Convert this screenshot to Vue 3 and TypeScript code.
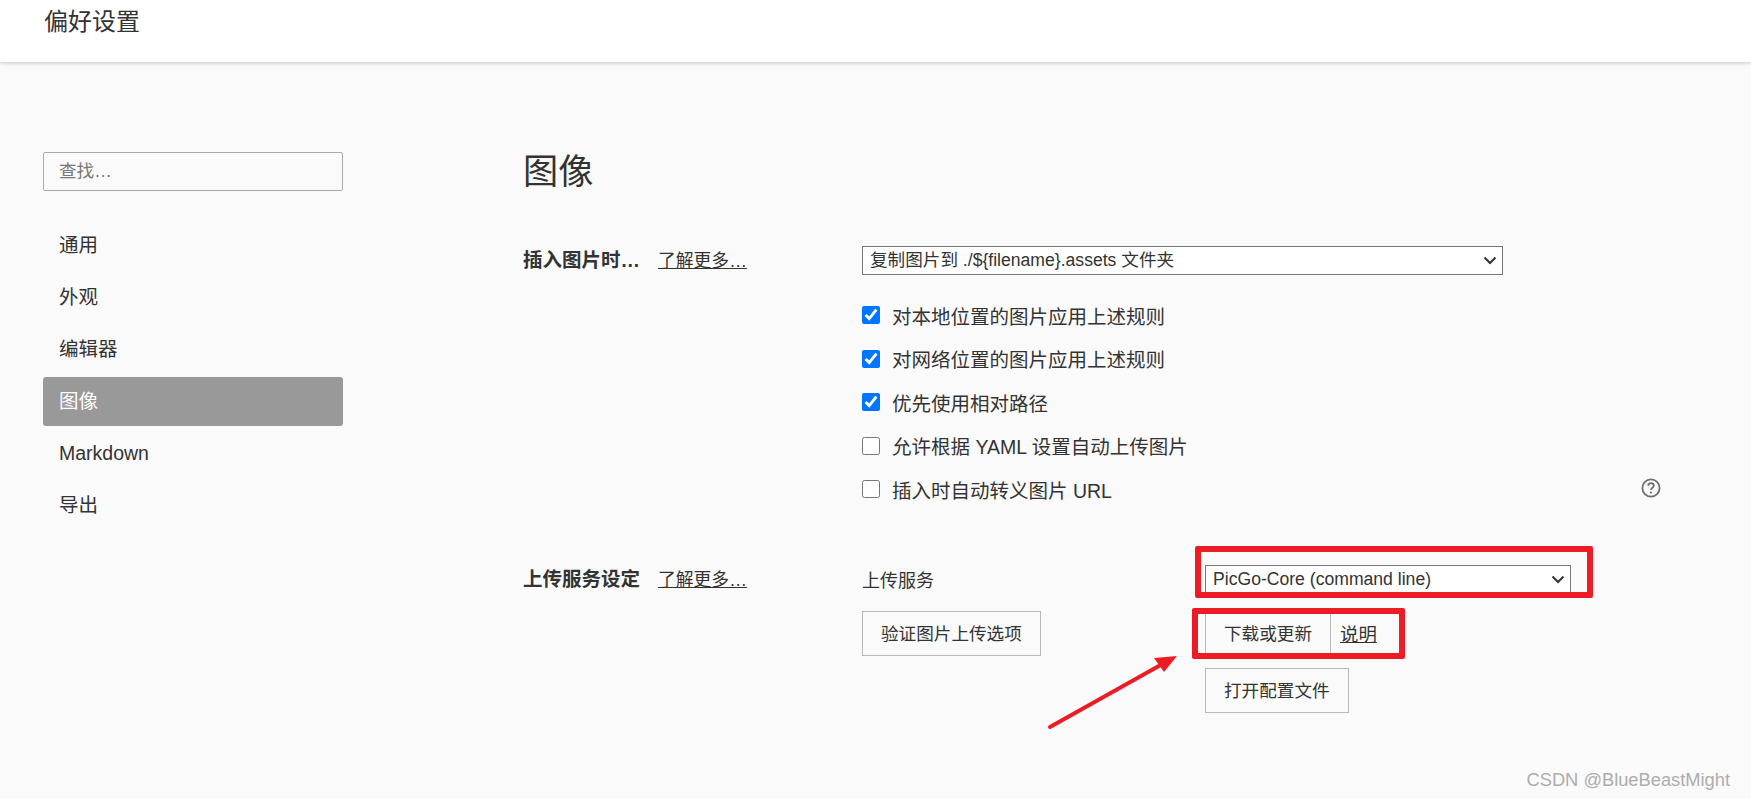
<script setup lang="ts">
const navItems = ['通用', '外观', '编辑器', '图像', 'Markdown', '导出']
const activeNav = '图像'

const imageRules = [
  { text: '对本地位置的图片应用上述规则', checked: true },
  { text: '对网络位置的图片应用上述规则', checked: true },
  { text: '优先使用相对路径', checked: true },
  { text: '允许根据 YAML 设置自动上传图片', checked: false },
  { text: '插入时自动转义图片 URL', checked: false },
]
</script>

<template>
  <div class="page">
    <header class="topbar">偏好设置</header>

    <div class="layout">
      <aside class="sidebar">
        <input class="search" type="text" placeholder="查找…" />
        <nav class="nav">
          <div
            v-for="item in navItems"
            :key="item"
            class="nav-item"
            :class="{ active: item === activeNav }"
          >
            {{ item }}
          </div>
        </nav>
      </aside>

      <main class="content">
        <h1 class="title">图像</h1>

        <section class="row insert-row">
          <div class="row-head">
            <span class="row-label">插入图片时…</span>
            <a class="more">了解更多…</a>
          </div>
          <div class="row-body">
            <div class="select-wrap wide">
              <select class="select">
                <option>复制图片到 ./${filename}.assets 文件夹</option>
              </select>
              <svg class="chevron" viewBox="0 0 14 9"><path d="M1.5 1.5 7 7l5.5-5.5" /></svg>
            </div>
            <div class="checks">
              <label v-for="rule in imageRules" :key="rule.text" class="check">
                <input type="checkbox" :checked="rule.checked" />
                <span>{{ rule.text }}</span>
              </label>
              <svg class="help" viewBox="0 0 20 20">
                <circle cx="10" cy="10" r="8.6" />
                <path d="M7.2 7.8c0-1.6 1.2-2.7 2.8-2.7s2.8 1 2.8 2.5c0 2.2-2.8 2.2-2.8 4.4" />
                <circle class="dot" cx="10" cy="14.6" r="1.1" />
              </svg>
            </div>
          </div>
        </section>

        <section class="row upload-row">
          <div class="row-head">
            <span class="row-label">上传服务设定</span>
            <a class="more">了解更多…</a>
          </div>
          <div class="upload-grid">
            <div class="upload-left">
              <div class="service-label">上传服务</div>
              <button class="btn">验证图片上传选项</button>
            </div>
            <div class="upload-right">
              <div class="select-wrap service marked">
                <select class="select">
                  <option>PicGo-Core (command line)</option>
                </select>
                <svg class="chevron" viewBox="0 0 14 9"><path d="M1.5 1.5 7 7l5.5-5.5" /></svg>
                <div class="mark mark-select"></div>
              </div>
              <div class="btn-line marked">
                <button class="btn">下载或更新</button>
                <a class="doc">说明</a>
                <div class="mark mark-buttons"></div>
                <svg class="arrow" viewBox="0 0 140 80">
                  <path class="arrow-line" d="M6 74 122 9" />
                  <path class="arrow-head" d="M133 3 110 5 120 19Z" />
                </svg>
              </div>
              <button class="btn">打开配置文件</button>
            </div>
          </div>
        </section>
      </main>
    </div>

    <div class="watermark">CSDN @BlueBeastMight</div>
  </div>
</template>

<style>
html,
body {
  margin: 0;
  background: #fafafa;
}
</style>

<style scoped>
.page {
  position: relative;
  height: 799px;
  overflow: hidden;
  background: #fafafa;
  color: #333;
  font-family: "Liberation Sans", "Noto Sans CJK SC", sans-serif;
  font-size: 17.6px;
}

.topbar {
  height: 62px;
  box-sizing: border-box;
  padding: 5px 0 0 44px;
  background: #fff;
  font-size: 24px;
  line-height: 34px;
  box-shadow: 0 1px 4px rgba(0, 0, 0, 0.22);
}

.layout {
  display: flex;
}

.sidebar {
  width: 300px;
  margin-left: 43px;
  padding-top: 90px;
}

.search {
  display: block;
  width: 100%;
  height: 39px;
  box-sizing: border-box;
  padding: 0 15px;
  border: 1px solid #aaa;
  border-radius: 2px;
  background: transparent;
  font: inherit;
  outline: none;
}

.search::placeholder {
  color: #777;
}

.nav {
  display: flex;
  flex-direction: column;
  gap: 3px;
  margin-top: 30px;
}

.nav-item {
  height: 49px;
  box-sizing: border-box;
  padding-left: 16px;
  border-radius: 3px;
  font-size: 19.5px;
  line-height: 48.5px;
}

.nav-item.active {
  background: #999;
  color: #fff;
}

.content {
  flex: 1;
  margin-left: 180px;
}

.title {
  margin: 85px 0 0;
  font-size: 35.2px;
  font-weight: 400;
  line-height: 50px;
}

.row {
  display: flex;
}

.insert-row {
  margin-top: 49px;
}

.upload-row {
  margin-top: 61px;
}

.row-head {
  display: flex;
  flex: none;
  width: 339px;
  align-items: baseline;
  line-height: 28px;
}

.row-label {
  width: 135px;
  font-size: 19.5px;
  font-weight: 700;
}

.more {
  font-size: 17.8px;
  text-decoration: underline;
  color: #333;
}

.row-body {
  flex: 1;
}

.select-wrap {
  position: relative;
  height: 29px;
}

.select-wrap.wide {
  width: 641px;
}

.select-wrap.service {
  width: 366px;
}

.select {
  display: block;
  width: 100%;
  height: 100%;
  box-sizing: border-box;
  padding: 0 30px 2px 7px;
  border: 1px solid #767676;
  border-radius: 0;
  background: #fff;
  color: #333;
  font: inherit;
  appearance: none;
}

.chevron {
  position: absolute;
  top: 10px;
  right: 6px;
  width: 14px;
  height: 9px;
  fill: none;
  stroke: #333;
  stroke-width: 2;
}

.checks {
  position: relative;
  display: flex;
  flex-direction: column;
  gap: 14px;
  margin-top: 25.5px;
}

.check {
  display: flex;
  align-items: center;
  gap: 12px;
  height: 29.5px;
  font-size: 19.5px;
}

.check input {
  width: 18px;
  height: 18px;
  margin: 0;
  accent-color: #0075ff;
}

.help {
  position: absolute;
  right: 90px;
  bottom: 6px;
  width: 20px;
  height: 20px;
  fill: none;
  stroke: #6e6e6e;
  stroke-width: 1.8;
}

.help .dot {
  fill: #6e6e6e;
  stroke: none;
}

.upload-grid {
  display: flex;
}

.upload-left {
  width: 343px;
}

.service-label {
  height: 46px;
  padding-top: 2px;
  box-sizing: border-box;
  line-height: 28px;
  font-size: 18px;
}

.upload-right {
  display: flex;
  flex-direction: column;
  align-items: flex-start;
}

.btn {
  display: block;
  height: 45px;
  padding: 0 18px 2px;
  border: 1px solid #b8b8b8;
  background: transparent;
  color: #333;
  font: inherit;
  white-space: nowrap;
}

.btn-line {
  display: flex;
  align-items: center;
  margin: 17px 0 12px;
}

.doc {
  margin-left: 9px;
  margin-bottom: 2px;
  font-size: 18.4px;
  text-decoration: underline;
}

.marked {
  position: relative;
}

.mark {
  position: absolute;
  box-sizing: border-box;
  border: 6.5px solid #ed1c24;
  border-radius: 2px;
  pointer-events: none;
}

.mark-select {
  left: -10px;
  top: -19px;
  width: 398px;
  height: 52px;
}

.mark-buttons {
  left: -13px;
  top: -3px;
  width: 213px;
  height: 51px;
}

.arrow {
  position: absolute;
  left: -161px;
  top: 42px;
  width: 140px;
  height: 80px;
  overflow: visible;
}

.arrow-line {
  fill: none;
  stroke: #ed1c24;
  stroke-width: 4;
  stroke-linecap: round;
}

.arrow-head {
  fill: #ed1c24;
}

.watermark {
  position: absolute;
  right: 21px;
  bottom: 8px;
  color: #adadad;
  font-size: 18.3px;
  line-height: 22px;
}
</style>
